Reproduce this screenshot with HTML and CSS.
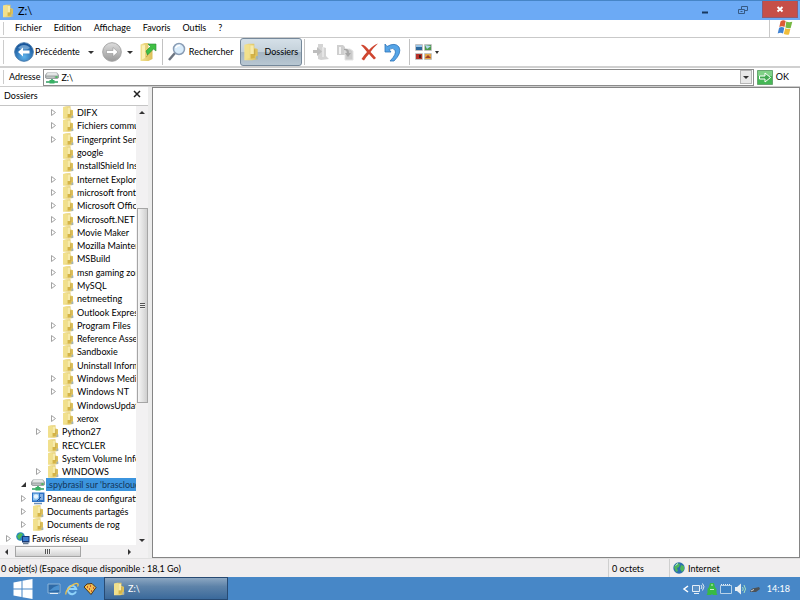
FILE: index.html
```html
<!DOCTYPE html>
<html lang="fr">
<head>
<meta charset="utf-8">
<title>Z:\</title>
<link rel="stylesheet" href="styles.css">
</head>
<body>
<svg class="defs" aria-hidden="true">
  <defs>
    <linearGradient id="gy" x1="0" x2="1"><stop offset="0" stop-color="#f3e394"/><stop offset="1" stop-color="#dcbf58"/></linearGradient>
    <radialGradient id="gb" cx=".5" cy=".75" r=".7"><stop offset="0" stop-color="#5fb4ec"/><stop offset="1" stop-color="#124f96"/></radialGradient>
    <linearGradient id="gg" x1="0" y1="0" x2="0" y2="1"><stop offset="0" stop-color="#ddd"/><stop offset="1" stop-color="#999"/></linearGradient>
  </defs>
  <symbol id="folder" viewBox="0 0 12 13">
    <path d="M1 1 4 .3h4.500V3.500l2.500.8v7.700l-4 .7H1z" fill="url(#gy)"/>
    <path d="M1.500 1.500 5 1v10l-3.500.8z" fill="#f1e08c"/>
    <path d="M5.500 1.500h2.500v6.500H5.500z" fill="#f7ebaa"/>
    <path d="M5.800 8v3.500l3-.5V8" fill="#d4b346"/>
    <path d="M8.800 4.500v4.500" stroke="#c5a445" stroke-width=".8"/>
    <path d="M9.800 9.500h1.500V12h-2z" fill="#a3b4b4"/>
  </symbol>
  <symbol id="drive" viewBox="0 0 14 13">
    <path d="M2 1.500h10l2 2.500v2.500L12.500 8h-11L0 6.500V4z" fill="#9ca2a3"/><path d="M2.500 2h9L13 4.500H1z" fill="#e3e6e6"/>
    <path d="M1.500 6.200h8" stroke="#cdd1d1"/><path d="M10.500 5.300h2v1.500h-2z" fill="#35c44a"/>
    <path d="M7 8v3M1 11h12" stroke="#2f9d62" stroke-width="1.600"/><path d="M4.500 9h5v3.500h-5z" fill="#36b163"/>
  </symbol>
  <symbol id="panel" viewBox="0 0 14 13">
    <path d="M1 .5h12.500v9.500H1z" fill="#2d72c5"/><path d="M2 1.500h6v7H2z" fill="#8cc4ef"/><circle cx="5" cy="4.500" r="2.200" fill="#e7f4fd"/>
    <path d="M9 3h3M9 5h3M9 7h3" stroke="#dbeeff"/><path d="M3 11.500h8" stroke="#6c91b8" stroke-width="1.500"/><path d="m6 9 4-4" stroke="#1e4e94"/>
  </symbol>
  <symbol id="net" viewBox="0 0 14 13">
    <circle cx="4.500" cy="4.500" r="4.300" fill="#2686bd"/><path d="M1 4 4 1l3 1-2 3-2 3z" fill="#4cba56"/>
    <path d="M6 4h7.500v6.500H6z" fill="#173975"/><path d="M7 5h5.500v4H7z" fill="#3a7ad0"/><path d="M7 11.500h5.500" stroke="#64798f" stroke-width="1.500"/>
  </symbol>
  <symbol id="closed" viewBox="0 0 7 9"><path d="M1.500 1.500v6l4-3z" fill="#fff" stroke="#a3a3a3"/></symbol>
  <symbol id="opened" viewBox="0 0 7 9"><path d="M6 2v5H1z" fill="#333"/></symbol>
  <symbol id="globe" viewBox="0 0 12 12">
    <circle cx="6" cy="6" r="5.700" fill="#2b6fae"/><path d="M1 5 4 1l3 1-1 3-2 1 1 3-2 1zM8 3l3 1v4L9 10 7 7z" fill="#4eb65b"/><path d="M2.500 3.500 5 1.500" stroke="#cbe8f8"/>
  </symbol>
  <symbol id="flag" viewBox="0 0 16 16">
    <path d="M3.500 1.500Q6-.5 8.700 1L7.500 7Q5 5.500 2.300 7z" fill="#dd5a35"/><path d="M9.300 1.500q2.500 1.200 6 .3L13.700 8q-2.700.8-5.300-.5z" fill="#77b843"/>
    <path d="M2.100 7.700q2.500-1.500 5.200 0L6 13.500q-2.500-1.500-5.300 0z" fill="#3f82d3"/><path d="M8.200 8.300q2.500 1.200 5.200.4L12 14.500q-2.500.8-5.200-.5z" fill="#f0bd3c"/>
  </symbol>
</svg>

<header class="titlebar">
  <svg class="ic13"><use href="#folder"/></svg>
  <h1>Z:\</h1>
  <div class="winbtns">
    <button aria-label="Réduire"><svg viewBox="0 0 10 10"><path d="M2 7.500h6" stroke="#17385f" stroke-width="2"/></svg></button>
    <button aria-label="Niveau inférieur"><svg viewBox="0 0 10 10"><path d="M3.500 4V1.500h6v4H7M.5 4.500h6v4h-6zM2.500 6.500h2" fill="none" stroke="#365a85"/></svg></button>
    <button class="close" aria-label="Fermer"><svg viewBox="0 0 10 10"><path d="m2.500 3 5 4.500m0-4.500-5 4.500" stroke="#fff" stroke-width="2"/></svg></button>
  </div>
</header>

<nav class="menubar">
  <span class="grip"></span>
  <button>Fichier</button><button>Edition</button><button>Affichage</button><button>Favoris</button><button>Outils</button><button>?</button>
  <span class="brand"><svg><use href="#flag"/></svg></span>
</nav>

<div class="toolbar" role="toolbar">
  <span class="grip"></span>
  <button class="back"><svg class="ic20" viewBox="0 0 20 20"><circle cx="10" cy="10" r="9.300" fill="url(#gb)" stroke="#477bad"/><path d="M4 6a7.500 7.500 0 0 1 12 0q-5 3-12 0" fill="#9dc4e6" opacity=".6"/><path d="M4 10l5-4.500V8.500h6.500v3H9v3z" fill="#fff"/></svg>Précédente</button>
  <button class="drop" aria-label="Historique précédent"><i class="caret"></i></button>
  <button aria-label="Suivante"><svg class="ic20" viewBox="0 0 20 20"><circle cx="10" cy="10" r="9.300" fill="url(#gg)" stroke="#a5a5a5"/><path d="M16 10l-5-4.500V8.500H4.500v3H11v3z" fill="#fff" stroke="#888" stroke-width=".5"/></svg></button>
  <button class="drop narrow" aria-label="Historique suivant"><i class="caret"></i></button>
  <button aria-label="Dossier parent"><svg class="ic20" viewBox="0 0 20 20"><path d="M2.500 2.500l4-1.500h4V6l4 1v10l-4 2h-8z" fill="url(#gy)"/><path d="M4 3.500 7 3v13l-3 1.500z" fill="#fbf0b5"/><path d="m8 15 1.500-1V9" fill="none" stroke="#c4a548"/><path d="M8 9 12.500 4.500 10 2h8v7l-2.500-2-6 6z" fill="#3fc044" stroke="#2b8c39" stroke-width=".6"/></svg></button>
  <span class="sep"></span>
  <button class="find"><svg class="ic20" viewBox="0 0 20 20"><path d="m2 18 6-7" stroke="#6d7580" stroke-width="2.500"/><circle cx="12" cy="7" r="5.500" fill="#d9ecfb" stroke="#8a9db5" stroke-width="1.500"/><path d="M8.500 6Q10 3 13 3.500" fill="none" stroke="#fff" stroke-width="1.500"/></svg>Rechercher</button>
  <button class="pressed" aria-pressed="true"><svg class="ic18"><use href="#folder"/></svg>Dossiers</button>
  <span class="sep"></span>
  <button class="tool" aria-label="Déplacer vers"><svg class="ic20" viewBox="0 0 20 20"><path d="M7 2h5v3l3 1v8l3 3-8 1-3-1z" fill="#d4d4d4"/><path d="M2 8h4V5l5 4.500L6 14v-3H2z" fill="#bdbdbd"/><path d="M12 5v10" stroke="#f5f5f5"/></svg></button>
  <button class="tool" aria-label="Copier vers"><svg class="ic20" viewBox="0 0 20 20"><path d="M2 3h6l2 2v8H2z" fill="#cfcfcf"/><path d="M4 5h2v7H4z" fill="#f3f3f3"/><path d="M10 7h5l3 2v9h-8z" fill="#cbcbcb" stroke="#e4e4e4"/><path d="M9 7q5-1 5 4h2l-3 4-3-4h2q0-3-3-3z" fill="#a6a6a6"/></svg></button>
  <button class="tool" aria-label="Supprimer"><svg class="ic20" viewBox="0 0 20 20"><path d="M2 3q3-1 8 5Q14 3 19 1.500 14 6 11.500 10q3 3 5.500 6l-2 1.500q-3-3-5-5.500-3 3-5 6.500L2.500 17Q5 13 8 10 5 6 2 3" fill="#cf4630"/></svg></button>
  <button class="tool" aria-label="Annuler"><svg class="ic20" viewBox="0 0 20 20"><path d="M2 2l2 2.500Q12 0 16 5q3 6-5 14H7q7-7 5-11-2-3-6-.5L8 10H2z" fill="#55a5e8" stroke="#2e73b8" stroke-width=".8"/></svg></button>
  <span class="sep"></span>
  <button class="views" aria-label="Affichage"><svg class="ic20" viewBox="0 0 20 20"><path d="M1.500 2.500h7v6h-7zM10.500 2.500h7v6h-7zM1.500 11.500h7v6h-7zM10.500 11.500h7v6h-7z" fill="#fff" stroke="#c2c2c2"/><path d="M2 3h6v2H2z" fill="#9ac4e8"/><path d="M2 5h6v3H2z" fill="#2b679c"/><path d="M11 3h6v5h-6z" fill="#4c9b4c"/><path d="m11 3 6 1-4 3z" fill="#b4d8ef"/><path d="M2 12h6v5H2z" fill="#b9312a"/><path d="M5 13h2v3H5z" fill="#41201d"/><path d="M11 12h6v5h-6z" fill="#e4a748"/><path d="m11 16 3-3 3 3z" fill="#a13f28"/></svg><i class="caret small"></i></button>
</div>

<form class="address">
  <span class="grip"></span>
  <label for="addr">Adresse</label>
  <div class="combo">
    <svg class="ic14"><use href="#drive"/></svg>
    <input id="addr" value="Z:\">
    <button type="button" class="pick" aria-label="Dérouler"><i class="caret"></i></button>
  </div>
  <button type="button" class="go"><svg viewBox="0 0 16 15"><path d="M.5.500h15v14H.5z" fill="#46b856" stroke="#69a672"/><path d="M1 1h14v5H1z" fill="#7fd186"/><path d="M2.500 6H8V3l5.500 4.500L8 12V9H2.500z" fill="#41a951" stroke="#fff"/></svg>OK</button>
</form>

<main class="main">
  <aside class="side">
    <div class="sidehead"><h2>Dossiers</h2><button aria-label="Fermer le volet"><svg viewBox="0 0 8 8"><path d="m1 1 6 6m0-6L1 7" stroke="#222" stroke-width="1.500"/></svg></button></div>
    <div class="treebox">
      <ul class="tree" role="tree" id="tree"></ul>
      <div class="vscroll"><i class="caret up"></i><span class="gap-a"></span><span class="thumb"></span><span class="gap-b"></span><i class="caret"></i></div>
    </div>
    <div class="hscroll"><i class="caret left"></i><span class="thumb"></span><i class="caret right"></i></div>
  </aside>
  <section class="content" aria-label="Contenu de Z:\"></section>
</main>

<footer class="status">
  <span class="info">0 objet(s) (Espace disque disponible : 18,1 Go)</span>
  <span class="size">0 octets</span>
  <span class="zone"><svg><use href="#globe"/></svg>Internet</span>
</footer>

<div class="taskbar">
  <button class="start" aria-label="Démarrer"><svg viewBox="0 0 20 20"><path d="M.5 3.500 8.500 2v7.500h-8zM9.500 1.800 19.500 0v9.500h-10zM.5 10.500h8V18l-8-1.500zM9.500 10.500h10V20l-10-1.800z" fill="#fff"/></svg></button>
  <button class="quick" aria-label="Bureau"><svg viewBox="0 0 14 14"><path d="M1 2h12v9H1z" fill="#2e6aa6" stroke="#8db4d8"/><path d="m2 9 5-4 5-2v5z" fill="#4b91cf"/><path d="M3 11.500h8" stroke="#e4eef6"/></svg></button>
  <button class="quick" aria-label="Internet Explorer"><svg viewBox="0 0 14 14"><path d="M11 9.500A4.200 4.200 0 1 1 11.200 7H4" fill="none" stroke="#8fd3fa" stroke-width="2"/><path d="M1 12.500Q0 9 6 4q5-4 7-2 .5 1-.5 2.500" fill="none" stroke="#f0c34c" stroke-width="1.300"/></svg></button>
  <button class="quick" aria-label="Sandboxie"><svg viewBox="0 0 14 14"><path d="M1 5 4 2l5-.5 4 4-5 7z" fill="#f1bd50" stroke="#4d3516"/><path d="M4 5h1m2-1h1m2 2h1M6 7h1m1 2h1" stroke="#bc3a22" stroke-width="1.400"/></svg></button>
  <button class="task"><svg class="ic13"><use href="#folder"/></svg>Z:\</button>
  <div class="tray">
    <svg viewBox="0 0 8 12"><path d="M6 3 2 6l4 3" fill="none" stroke="#fff" stroke-width="1.500"/></svg>
    <svg class="wide" viewBox="0 0 14 12"><path d="M1.500 2.500h7v6h-7zM3 10.500h5" fill="#5d92c6" stroke="#e5eef6"/><path d="M10 2q2 2 0 4m1.500-5.500q3 3 0 7" fill="none" stroke="#e5eef6"/></svg>
    <svg class="mid" viewBox="0 0 12 12"><path d="M4 0h4l1 4 1.500 2v4l1 2H7l-1-1-1 1H.5l1-2V6L3 4z" fill="#38ba45"/><path d="M5 2h2M4 6.500h4" stroke="#c9f1c9"/></svg>
    <svg class="wide" viewBox="0 0 14 12"><path d="M1.500 2.500h11v8h-11z" fill="#3d82c4" stroke="#b8d2e8"/><path d="M2 1.500h10" stroke="#e4eff8" stroke-dasharray="1 1"/></svg>
    <svg class="wide" viewBox="0 0 14 12"><path d="M1 4h2l4-3.500v11L3 8H1z" fill="#e9eef2"/><path d="M8.500 4q1.500 2 0 4m1.500-6q3 4 0 8" fill="none" stroke="#a7e2c0"/></svg>
    <svg class="mid" viewBox="0 0 12 12"><path d="M1 9q1-4 5-4l4-1 1 2-4 3z" fill="#4c5257"/><path d="m2 8 3-1.500" stroke="#d5d5d5"/></svg>
    <time>14:18</time>
  </div>
</div>
<script src="tree.js"></script>
</body>
</html>
```
FILE: styles.css
```css
* { box-sizing: border-box; }
html, body { height: 100%; }
body {
  margin: 0;
  display: flex;
  flex-direction: column;
  overflow: hidden;
  background: #fff;
  color: #000;
  font: 9px/12px Lato, sans-serif;
}
h1, h2 { margin: 0; font-size: inherit; font-weight: normal; }
button { display: flex; align-items: center; border: 0; padding: 0; background: none; color: inherit; font: inherit; }
svg { display: block; flex: none; }
.defs { position: absolute; width: 0; height: 0; }
.ic13 { width: 12px; height: 14px; }
.ic14 { width: 14px; height: 13px; }
.ic18 { width: 16px; height: 18px; }
.ic20 { width: 20px; height: 20px; }
.caret { flex: none; width: 0; height: 0; border: 3px solid transparent; border-top-color: #333; border-bottom: 0; }
.caret.up { border-top: 0; border-bottom: 3px solid #333; }
.caret.left { border: 3px solid transparent; border-right-color: #333; border-left: 0; }
.caret.right { border: 3px solid transparent; border-left-color: #333; border-right: 0; }
.caret.small { border-width: 3px 2px 0; }
.grip { flex: none; align-self: stretch; width: 1px; margin: 2px 0 2px 3px; background: #ccc; }

.titlebar { display: flex; flex: none; align-items: center; height: 20px; padding-left: 2px; gap: 4px; background: #6caaf5; border-top: 1px solid #4685c7; }
.titlebar h1 { font-size: 11px; }
.winbtns { display: flex; margin-left: auto; padding-right: 2px; height: 100%; }
.winbtns button { width: 38px; justify-content: center; height: 17px; }
.winbtns svg { width: 10px; height: 10px; }
.winbtns .close { width: 36px; background: #c64f48; border: 1px solid #8d5c74; border-top: 0; }

.menubar { display: flex; flex: none; height: 18px; gap: 12px; border-bottom: 1px solid #c9c9c9; }
.menubar .grip { margin-right: -1px; }
.menubar button { height: 16px; }
.brand { margin-left: auto; padding: 0 7px; border-left: 1px solid #c9c9c9; }
.brand svg { width: 16px; height: 16px; }

.toolbar { display: flex; flex: none; align-items: center; height: 30px; border-bottom: 2px solid #d0d0d0; }
.toolbar .grip { margin-right: 10px; }
.back { gap: 1px; }
.drop { width: 22px; height: 20px; justify-content: center; }
.drop.narrow { width: 16px; }
.sep { width: 1px; height: 26px; margin: 0 4px; background: #c2c2c2; }
.find { gap: 2px; margin-right: 7px; }
.pressed { height: 28px; width: 62px; padding-left: 2px; gap: 5px; border: 1px solid #75889a; border-radius: 3px; background: linear-gradient(#d5e0e8, #c4d1da 50%, #a6b6c3 52%, #b8c7d2); }
.pressed + .sep { margin-left: 2px; }
.tool { margin: 0 2px; }
.views { gap: 1px; }

.address { display: flex; flex: none; align-items: center; height: 19px; margin: 0; gap: 3px; border-bottom: 1px solid #ccc; }
.address .grip { margin-right: 2px; }
.combo { display: flex; flex: 1; align-items: center; height: 17px; padding: 0 1px; border: 1px solid #8c8c8c; }
.combo input { flex: 1; min-width: 0; height: 14px; padding: 0 2px; border: 0; background: none; font: inherit; color: inherit; outline: 0; }
.pick { width: 12px; height: 14px; justify-content: center; background: #e9e9e9; border: 1px solid #b5b5b5; }
.go { gap: 3px; padding-right: 11px; }
.go svg { width: 16px; height: 15px; }

.main { display: flex; flex: 1; min-height: 0; background: #ececec; }
.side { display: flex; flex-direction: column; flex: none; width: 148px; margin-right: 4px; background: #fff; }
.sidehead { display: flex; flex: none; align-items: center; justify-content: space-between; height: 19px; padding: 0 7px 0 4px; border-bottom: 1px solid #c5c5c5; }
.sidehead button { padding-bottom: 4px; }
.sidehead svg { width: 8px; height: 8px; }
.treebox { display: flex; flex: 1; min-height: 0; }
.tree { display: flex; flex: 1; flex-direction: column; min-width: 0; margin: 0; padding: 0; list-style: none; overflow: hidden; }
.tree li { display: flex; flex: 1; align-items: center; min-height: 0; white-space: nowrap; }
.l0 { padding-left: 5px; }
.l1 { padding-left: 20px; }
.l2 { padding-left: 35px; }
.l3 { padding-left: 50px; }
.twist { flex: none; width: 7px; height: 9px; margin-right: 4px; }
.twist svg { width: 7px; height: 9px; }
.tree li > svg { width: 14px; height: 13px; }
.name { flex: 1; margin-left: 1px; padding-left: 1px; line-height: 13px; overflow: hidden; }
.selected .name { background: #3b94de; color: #15375c; }
.vscroll { display: flex; flex: none; flex-direction: column; align-items: center; width: 12px; padding: 5px 0 3px; background: #f2f1f2; }
.thumb { display: flex; border: 1px solid #a5a5a5; background: linear-gradient(90deg, #f6f6f6, #cfcfcf); }
.vscroll .thumb { flex: 194; width: 11px; align-items: center; }
.vscroll .thumb::before { content: ""; width: 5px; height: 6px; margin-left: 2px; background: repeating-linear-gradient(#555 0 1px, #eee 1px 2px); }
.gap-a { flex: 94; }
.gap-b { flex: 136; }
.hscroll { display: flex; flex: none; align-items: center; height: 13px; padding: 0 17px 0 5px; background: #f2f1f2; }
.hscroll .thumb { width: 66px; height: 11px; margin: 0 auto 0 7px; align-items: center; justify-content: center; background: linear-gradient(#fafafa, #d2d2d2); }
.hscroll .thumb::before { content: ""; width: 6px; height: 5px; background: repeating-linear-gradient(90deg, #555 0 1px, #eee 1px 2px); }
.content { flex: 1; background: #fff; border: 1px solid #858585; }

.status { display: flex; flex: none; height: 19px; line-height: 19px; background: #f0eeef; border-top: 1px solid #e0e0e0; }
.status span { padding-left: 3px; border-left: 1px solid #cfcfcf; }
.status .info { flex: 1; padding-left: 1px; border: 0; }
.status .size { width: 61px; }
.status .zone { display: flex; align-items: center; width: 131px; gap: 3px; }
.zone svg { width: 12px; height: 12px; }

.taskbar { display: flex; flex: none; align-items: center; height: 23px; padding-left: 13px; background: #4787c7; color: #fff; }
.start { margin-right: 14px; }
.start svg { width: 20px; height: 20px; }
.quick { margin-right: 4px; }
.quick svg { width: 14px; height: 14px; }
.task { width: 124px; height: 23px; margin-left: 3px; padding-left: 8px; gap: 3px; border: 1px solid #274a73; background: linear-gradient(#8ca7c2, #5e83a9 40%, #3a699b); }
.tray { display: flex; align-items: center; gap: 1px; margin-left: auto; padding-right: 10px; }
.tray svg { width: 8px; height: 12px; }
.tray .wide { width: 14px; }
.tray .mid { width: 12px; }
.tray time { margin-left: 5px; }
```
FILE: tree.js
```js
// [level, icon, state, name]; state: "+" collapsed, "-" expanded, "" leaf
const rows = [
  [3, "folder", "+", "DIFX"],
  [3, "folder", "+", "Fichiers communs"],
  [3, "folder", "+", "Fingerprint Sensor"],
  [3, "folder", "", "google"],
  [3, "folder", "", "InstallShield Installation"],
  [3, "folder", "+", "Internet Explorer"],
  [3, "folder", "+", "microsoft frontpage"],
  [3, "folder", "+", "Microsoft Office"],
  [3, "folder", "+", "Microsoft.NET"],
  [3, "folder", "+", "Movie Maker"],
  [3, "folder", "", "Mozilla Maintenance"],
  [3, "folder", "+", "MSBuild"],
  [3, "folder", "+", "msn gaming zone"],
  [3, "folder", "+", "MySQL"],
  [3, "folder", "", "netmeeting"],
  [3, "folder", "", "Outlook Express"],
  [3, "folder", "+", "Program Files"],
  [3, "folder", "+", "Reference Assemblies"],
  [3, "folder", "", "Sandboxie"],
  [3, "folder", "", "Uninstall Information"],
  [3, "folder", "+", "Windows Media"],
  [3, "folder", "+", "Windows NT"],
  [3, "folder", "", "WindowsUpdate"],
  [3, "folder", "+", "xerox"],
  [2, "folder", "+", "Python27"],
  [2, "folder", "", "RECYCLER"],
  [2, "folder", "", "System Volume Information"],
  [2, "folder", "+", "WINDOWS"],
  [1, "drive", "-", ".spybrasil sur 'brascloud'"],
  [1, "panel", "+", "Panneau de configuration"],
  [1, "folder", "+", "Documents partagés"],
  [1, "folder", "+", "Documents de rog"],
  [0, "net", "+", "Favoris réseau"]
];
const glyph = { "+": "closed", "-": "opened" };
document.getElementById("tree").innerHTML = rows.map(([level, icon, state, name]) => {
  const twist = state
    ? `<button class="twist" aria-label="Développer ${name}"><svg><use href="#${glyph[state]}"/></svg></button>`
    : `<span class="twist"></span>`;
  return `<li role="treeitem" class="l${level}${state === "-" ? " selected" : ""}">${twist}<svg><use href="#${icon}"/></svg><span class="name">${name}</span></li>`;
}).join("");
```
